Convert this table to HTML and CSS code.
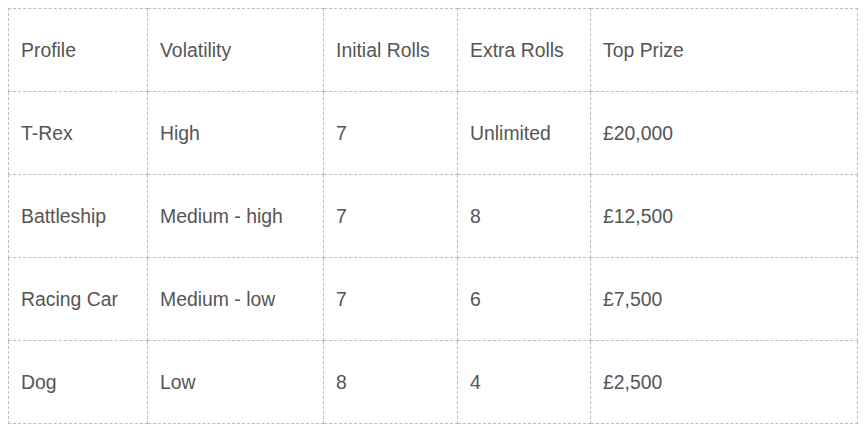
FILE: index.html
```html
<!DOCTYPE html>
<html>
<head>
<meta charset="utf-8">
<link rel="stylesheet" href="styles.css">
</head>
<body>
<table class="prizes">
  <colgroup>
    <col class="c1"><col class="c2"><col class="c3"><col class="c4"><col class="c5">
  </colgroup>
  <tr><td>Profile</td><td>Volatility</td><td>Initial Rolls</td><td>Extra Rolls</td><td>Top Prize</td></tr>
  <tr><td>T-Rex</td><td>High</td><td>7</td><td>Unlimited</td><td>£20,000</td></tr>
  <tr><td>Battleship</td><td>Medium - high</td><td>7</td><td>8</td><td>£12,500</td></tr>
  <tr><td>Racing Car</td><td>Medium - low</td><td>7</td><td>6</td><td>£7,500</td></tr>
  <tr><td>Dog</td><td>Low</td><td>8</td><td>4</td><td>£2,500</td></tr>
</table>
</body>
</html>
```
FILE: styles.css
```css
html, body {
  margin: 0;
  background: #ffffff;
}
body {
  padding: 8px;
  font-family: "Liberation Sans", Arial, sans-serif;
}
.prizes {
  border-collapse: collapse;
  table-layout: fixed;
  width: 849px;
  color: #555555;
  font-size: 19.4px;
}
.c1 { width: 139px; }
.c2 { width: 176px; }
.c3 { width: 134px; }
.c4 { width: 133px; }
.c5 { width: 267px; }
.prizes td {
  border: 1px dashed #bdbdbd;
  height: 82px;
  padding: 0 12px;
  vertical-align: middle;
  white-space: nowrap;
}
```
